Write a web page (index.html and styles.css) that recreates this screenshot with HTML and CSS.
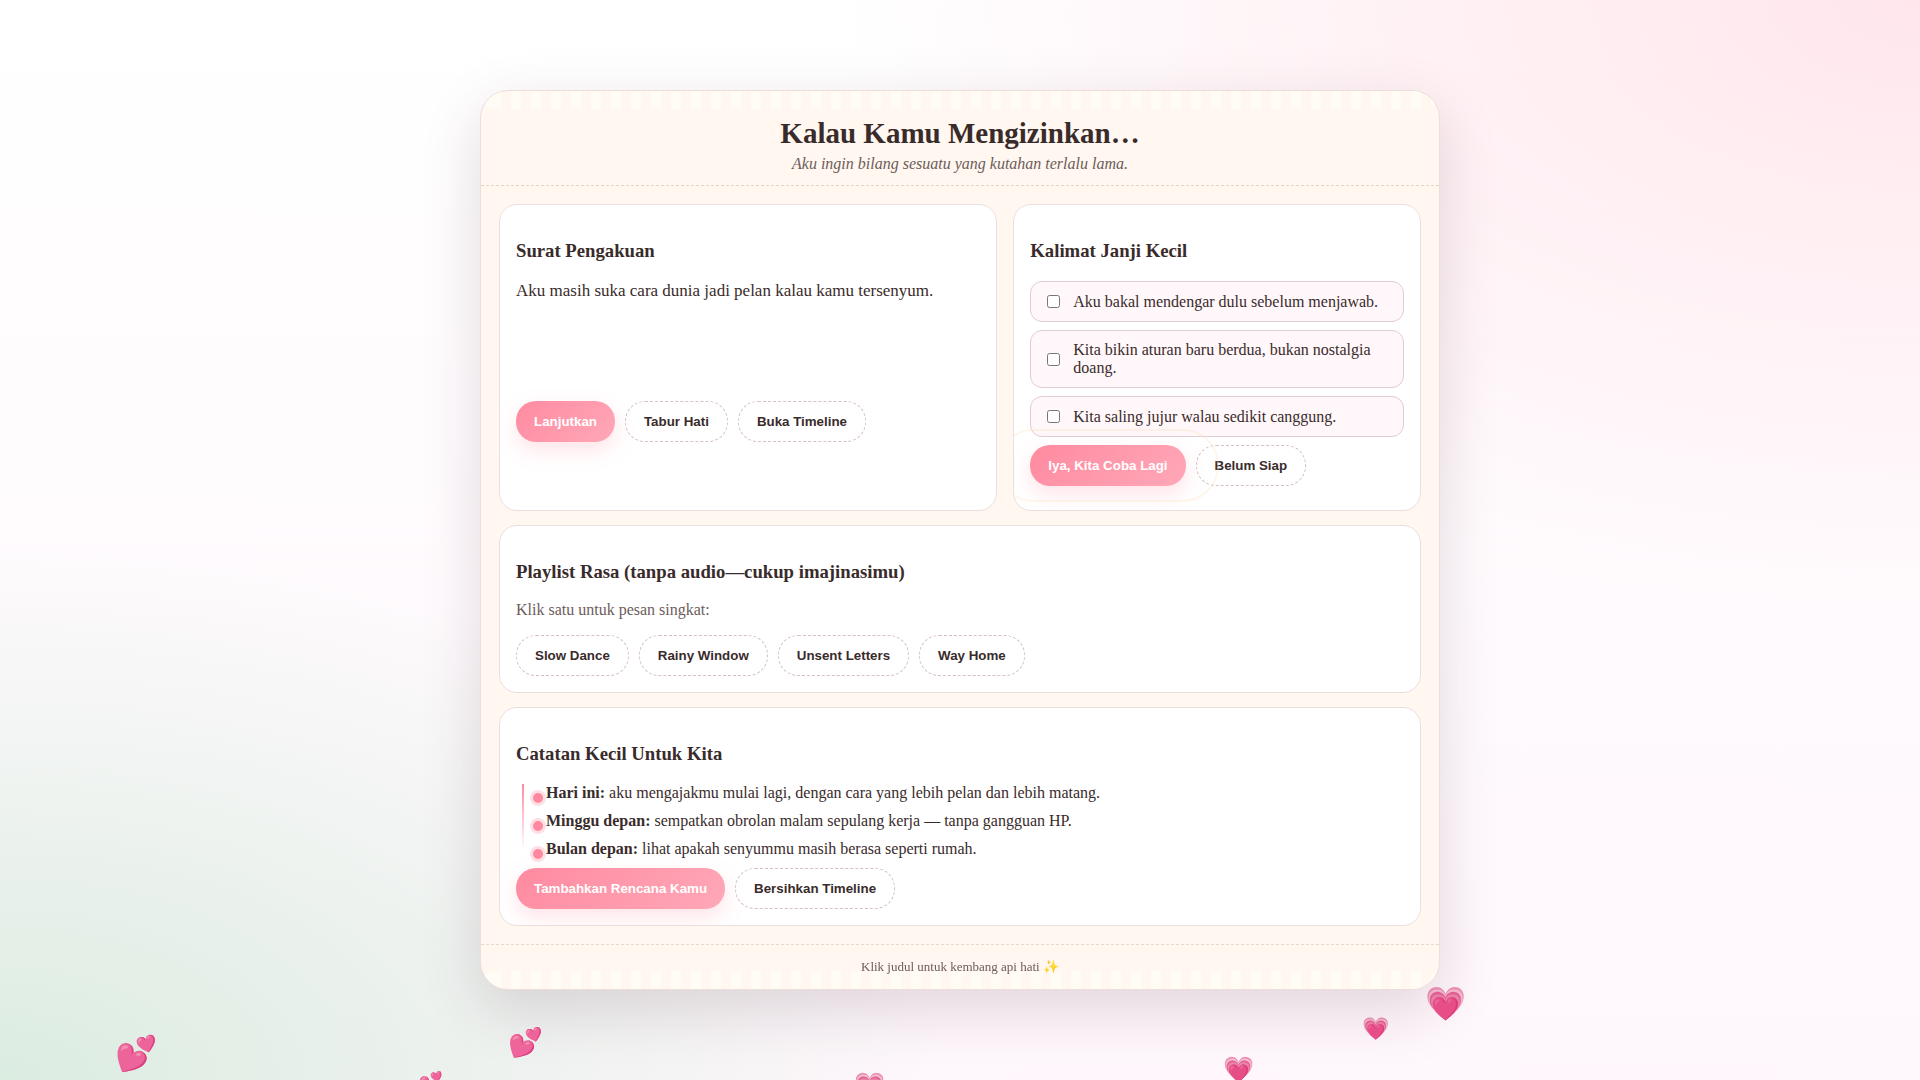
FILE: index.html
```html
<!DOCTYPE html>
<html lang="id">
<head>
    <meta charset="UTF-8">
    <meta name="viewport" content="width=device-width, initial-scale=1">
    <title>Kalau Kamu Mengizinkan…</title>
    <link rel="stylesheet" href="styles.css">
</head>
<body>
    <div class="hearts" aria-hidden="true">
        <span class="heart heart--1">💕</span>
        <span class="heart heart--2">💕</span>
        <span class="heart heart--3">💕</span>
        <span class="heart heart--4">💗</span>
        <span class="heart heart--5">💗</span>
        <span class="heart heart--6">💗</span>
        <span class="heart heart--7">💗</span>
    </div>

    <main class="card">
        <header class="header">
            <h1 class="header__title">Kalau Kamu Mengizinkan…</h1>
            <p class="header__sub">Aku ingin bilang sesuatu yang kutahan terlalu lama.</p>
        </header>

        <div class="content">
            <section class="panel">
                <h3 class="panel__title">Surat Pengakuan</h3>
                <div class="letter">Aku masih suka cara dunia jadi pelan kalau kamu tersenyum.</div>
                <div class="actions">
                    <button class="btn btn--primary" type="button">Lanjutkan</button>
                    <button class="btn btn--ghost" type="button">Tabur Hati</button>
                    <button class="btn btn--ghost" type="button">Buka Timeline</button>
                </div>
            </section>

            <section class="panel panel--promises">
                <h3 class="panel__title">Kalimat Janji Kecil</h3>
                <div class="promises">
                    <label class="promise"><input class="promise__check" type="checkbox"><span>Aku bakal mendengar dulu sebelum menjawab.</span></label>
                    <label class="promise"><input class="promise__check" type="checkbox"><span>Kita bikin aturan baru berdua, bukan nostalgia doang.</span></label>
                    <label class="promise"><input class="promise__check" type="checkbox"><span>Kita saling jujur walau sedikit canggung.</span></label>
                </div>
                <div class="actions">
                    <button class="btn btn--primary btn--pulse" type="button">Iya, Kita Coba Lagi</button>
                    <button class="btn btn--ghost" type="button">Belum Siap</button>
                </div>
            </section>

            <section class="panel panel--wide">
                <h3 class="panel__title">Playlist Rasa (tanpa audio—cukup imajinasimu)</h3>
                <p class="panel__hint">Klik satu untuk pesan singkat:</p>
                <div class="actions">
                    <button class="btn btn--ghost" type="button">Slow Dance</button>
                    <button class="btn btn--ghost" type="button">Rainy Window</button>
                    <button class="btn btn--ghost" type="button">Unsent Letters</button>
                    <button class="btn btn--ghost" type="button">Way Home</button>
                </div>
            </section>

            <section class="panel panel--wide">
                <h3 class="panel__title">Catatan Kecil Untuk Kita</h3>
                <div class="timeline">
                    <div class="timeline__item"><strong>Hari ini:</strong> aku mengajakmu mulai lagi, dengan cara yang lebih pelan dan lebih matang.</div>
                    <div class="timeline__item"><strong>Minggu depan:</strong> sempatkan obrolan malam sepulang kerja — tanpa gangguan HP.</div>
                    <div class="timeline__item"><strong>Bulan depan:</strong> lihat apakah senyummu masih berasa seperti rumah.</div>
                </div>
                <div class="actions">
                    <button class="btn btn--primary" type="button">Tambahkan Rencana Kamu</button>
                    <button class="btn btn--ghost" type="button">Bersihkan Timeline</button>
                </div>
            </section>
        </div>

        <footer class="footer">Klik judul untuk kembang api hati ✨</footer>
    </main>
</body>
</html>
```

FILE: styles.css
```css
* {
    box-sizing: border-box;
}

body {
    margin: 0;
    min-height: 100vh;
    display: grid;
    place-items: center;
    overflow: hidden;
    color: #3a2b2b;
    font-family: "Liberation Serif", "Times New Roman", serif;
    font-size: 16px;
    background:
        radial-gradient(ellipse at top right, #ffe6ec, transparent 40%),
        radial-gradient(ellipse at bottom left, #dbece1, transparent 35%),
        linear-gradient(180deg, #ffffff, #fff7fc);
}

/* Card */
.card {
    position: relative;
    width: min(960px, 92vw);
    background: #fff7f0;
    border: 1px solid #eedddb;
    border-radius: 28px;
    box-shadow: 0 20px 60px rgba(58, 20, 40, 0.15);
    overflow: hidden;
}

/* Lace strips along the top and bottom edges */
.card::before,
.card::after {
    content: "";
    position: absolute;
    left: 0;
    right: 0;
    height: 18px;
    background:
        linear-gradient(#fffcf6, #fffcf6) left / 20px 100% no-repeat,
        repeating-linear-gradient(90deg, transparent 0 10px, #fffcf6 10px 20px);
    pointer-events: none;
}

.card::before {
    top: 0;
    border-radius: 0 0 14px 14px;
}

.card::after {
    bottom: 0;
    border-radius: 14px 14px 0 0;
    opacity: 0.9;
}

.header {
    padding: 26px 20px 12px;
    text-align: center;
    border-bottom: 1px dashed #e2d2c8;
}

.header__title {
    margin: 0;
    font-size: 29px;
    line-height: 32px;
    cursor: pointer;
}

.header__sub {
    margin: 6px 0 0;
    font-style: italic;
    color: #6d5c5a;
}

.content {
    display: grid;
    grid-template-columns: 1.1fr 0.9fr;
    gap: 14px 16px;
    padding: 18px;
}

/* Panels */
.panel {
    position: relative;
    padding: 16px;
    background: #ffffff;
    border: 1px solid #eadede;
    border-radius: 18px;
    overflow: hidden;
}

.panel--wide {
    grid-column: 1 / -1;
}

.panel--promises {
    padding-bottom: 24px;
}

.panel__title {
    margin: 19px 0;
    line-height: 22px;
}

.panel__hint {
    margin: 0 0 17px;
    line-height: 16px;
    color: #6d5c5a;
}

.letter {
    min-height: 120px;
    font-size: 17px;
    line-height: 19px;
}

/* Buttons */
.actions {
    display: flex;
    flex-wrap: wrap;
    gap: 10px;
}

.btn {
    padding: 12px 18px;
    border: 0;
    border-radius: 20px;
    font-family: "Liberation Sans", Arial, sans-serif;
    font-weight: 700;
    line-height: 17px;
    cursor: pointer;
}

.btn--primary {
    color: #ffffff;
    background: linear-gradient(135deg, #ff8aa0, #ffa8b8);
    box-shadow: 0 8px 20px rgba(255, 143, 163, 0.25);
}

.btn--ghost {
    padding: 11px 18px;
    color: #3a2b2b;
    background: transparent;
    border: 1px dashed #d5bfc5;
}

.btn--pulse {
    position: relative;
}

.btn--pulse::after {
    content: "";
    position: absolute;
    inset: -16px -33px;
    border: 2px solid rgba(255, 225, 190, 0.3);
    border-radius: 36px;
    pointer-events: none;
}

/* Promises */
.promises {
    display: grid;
    gap: 8px;
    margin-bottom: 8px;
}

.promise {
    display: flex;
    align-items: center;
    gap: 10px;
    padding: 10px 12px;
    line-height: 18px;
    background: #fff7fa;
    border: 1px solid #e0ccd3;
    border-radius: 12px;
}

.promise__check {
    flex: none;
}

/* Timeline */
.timeline {
    position: relative;
    padding-left: 30px;
}

.timeline::before {
    content: "";
    position: absolute;
    left: 6px;
    top: 0;
    bottom: 8px;
    width: 2px;
    background: linear-gradient(#ff8aa0, transparent);
}

.timeline__item {
    position: relative;
    margin-bottom: 10px;
    line-height: 18px;
}

.timeline__item::before {
    content: "";
    position: absolute;
    left: -13px;
    top: 9px;
    width: 10px;
    height: 10px;
    border-radius: 50%;
    background: #ff8aa0;
    box-shadow: 0 0 0 3px #ffdfe6;
}

.footer {
    position: relative;
    z-index: 1;
    padding: 14px;
    text-align: center;
    font-size: 13px;
    line-height: 16px;
    color: #6d5c5a;
    border-top: 1px dashed #e6d8cc;
}

/* Floating hearts */
.hearts {
    position: fixed;
    inset: 0;
    overflow: hidden;
    pointer-events: none;
    z-index: 1;
}

.heart {
    position: absolute;
    line-height: 1;
    opacity: 0.9;
}

.heart--1 {
    left: 115px;
    top: 1037px;
    font-size: 34px;
}

.heart--2 {
    left: 508px;
    top: 1029px;
    font-size: 28px;
}

.heart--3 {
    left: 418px;
    top: 1072px;
    font-size: 20px;
}

.heart--4 {
    left: 854px;
    top: 1073px;
    font-size: 25px;
}

.heart--5 {
    left: 1223px;
    top: 1057px;
    font-size: 25px;
}

.heart--6 {
    left: 1362px;
    top: 1018px;
    font-size: 22px;
}

.heart--7 {
    left: 1425px;
    top: 988px;
    font-size: 33px;
}
```
